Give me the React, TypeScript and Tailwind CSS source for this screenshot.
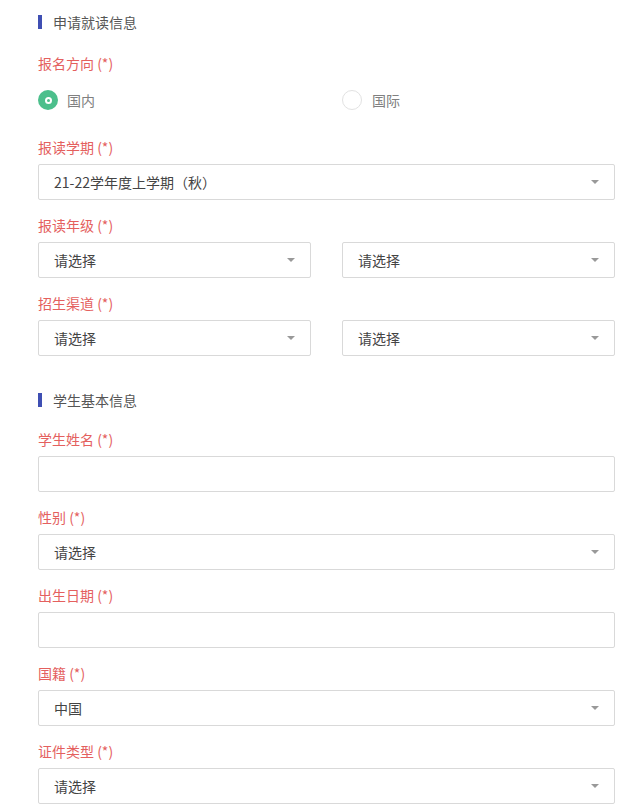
import React from "react";

const font = { fontFamily: '"Noto Sans CJK SC", "Noto Sans", sans-serif' };

const SectionTitle = ({ title }: { title: string }) => (
  <div className="flex items-center h-5">
    <span className="w-[4px] h-[14px] bg-[#3f4fb3] mr-[11px]"></span>
    <span className="text-[14px] text-[#555]">{title}</span>
  </div>
);

const Label = ({ text }: { text: string }) => (
  <div className="h-5 leading-5 text-[14px] text-[#e4605e] mb-[7px]">
    {text} (*)
  </div>
);

const Select = ({ value, className = "" }: { value: string; className?: string }) => (
  <div
    className={`h-9 border border-[#d9d9d9] rounded-[2px] bg-white flex items-center justify-between pl-[15px] pr-[10px] ${className}`}
  >
    <span className="text-[14px] text-[#444]">{value}</span>
    <span className="w-0 h-0 border-l-[4px] border-r-[4px] border-t-[4px] border-l-transparent border-r-transparent border-t-[#999] mr-[5px]"></span>
  </div>
);

const Input = () => <div className="h-9 border border-[#d9d9d9] rounded-[2px] bg-white"></div>;

const App = () => {
  return (
    <div className="w-[626px] min-h-[809px] bg-white pl-[38px] pr-[11px] pt-[12px]" style={font}>
      <SectionTitle title="申请就读信息" />

      <div className="mt-[21px]">
        <Label text="报名方向" />
        <div className="flex h-5 mt-[17px]">
          <div className="flex items-center w-[304px]">
            <span className="w-5 h-5 rounded-full bg-[#4cbf8c] flex items-center justify-center">
              <span className="w-[7px] h-[7px] rounded-full bg-white flex items-center justify-center">
                <span className="w-[3px] h-[3px] rounded-full bg-[#4cbf8c]"></span>
              </span>
            </span>
            <span className="ml-[9px] text-[14px] text-[#808080]">国内</span>
          </div>
          <div className="flex items-center">
            <span className="w-5 h-5 rounded-full border border-[#e2e2e2] bg-white"></span>
            <span className="ml-[10px] text-[14px] text-[#808080]">国际</span>
          </div>
        </div>
      </div>

      <div className="mt-[27px]">
        <Label text="报读学期" />
        <Select value="21-22学年度上学期（秋）" />
      </div>

      <div className="mt-[15px]">
        <Label text="报读年级" />
        <div className="grid grid-cols-2 gap-[31px]">
          <Select value="请选择" />
          <Select value="请选择" />
        </div>
      </div>

      <div className="mt-[15px]">
        <Label text="招生渠道" />
        <div className="grid grid-cols-2 gap-[31px]">
          <Select value="请选择" />
          <Select value="请选择" />
        </div>
      </div>

      <div className="mt-[34px]">
        <SectionTitle title="学生基本信息" />
      </div>

      <div className="mt-[19px]">
        <Label text="学生姓名" />
        <Input />
      </div>

      <div className="mt-[15px]">
        <Label text="性别" />
        <Select value="请选择" />
      </div>

      <div className="mt-[15px]">
        <Label text="出生日期" />
        <Input />
      </div>

      <div className="mt-[15px]">
        <Label text="国籍" />
        <Select value="中国" />
      </div>

      <div className="mt-[15px]">
        <Label text="证件类型" />
        <Select value="请选择" />
      </div>
    </div>
  );
};

export default App;
